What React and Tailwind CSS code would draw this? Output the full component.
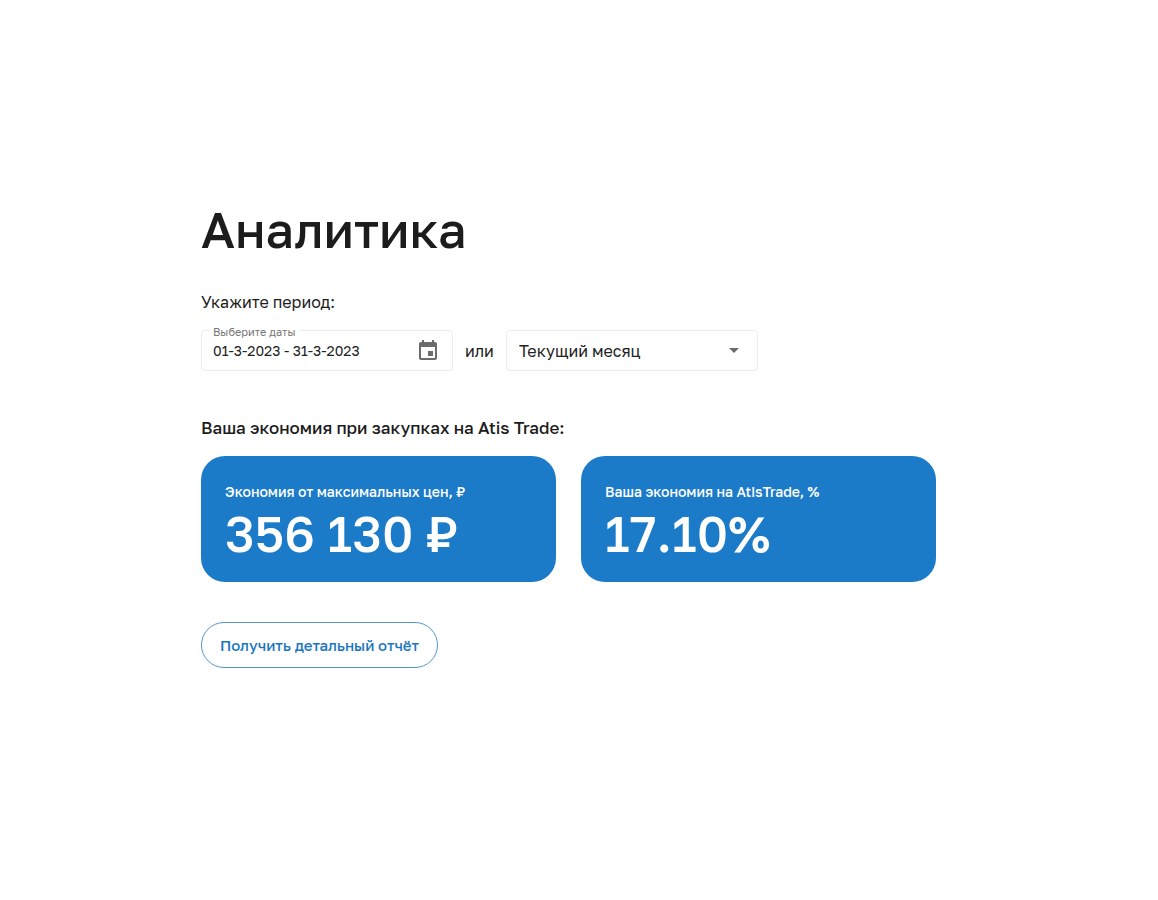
import { useState } from 'react';

const PERIODS = [
  { value: 'current', label: 'Текущий месяц' },
  { value: 'previous', label: 'Прошлый месяц' },
  { value: 'year', label: 'Текущий год' },
];

const STATS = [
  { title: 'Экономия от максимальных цен, ₽', value: '356 130 ₽' },
  { title: 'Ваша экономия на AtisTrade, %', value: '17.10%' },
];

function CalendarIcon() {
  return (
    <svg viewBox="0 0 24 24" className="h-6 w-6 fill-current" aria-hidden="true">
      <path d="M17 12h-5v5h5v-5zM16 1v2H8V1H6v2H5c-1.11 0-1.99.9-1.99 2L3 19c0 1.1.89 2 2 2h14c1.1 0 2-.9 2-2V5c0-1.1-.9-2-2-2h-1V1h-2zm3 18H5V8h14v11z" />
    </svg>
  );
}

function DateRangeField({ value, onChange }) {
  return (
    <div className="relative flex h-[41px] w-[252px] items-center rounded border border-[#ececec] pr-3 pl-[11px]">
      <label
        htmlFor="dates"
        className="absolute -top-[7px] left-2 bg-white px-[3px] text-[11px] leading-4 text-[#777777]"
      >
        Выберите даты
      </label>
      <input
        id="dates"
        type="text"
        value={value}
        onChange={(e) => onChange(e.target.value)}
        className="min-w-0 flex-1 bg-transparent text-sm text-[#222222] outline-none"
      />
      <button type="button" aria-label="Открыть календарь" className="text-[#6b6b6b]">
        <CalendarIcon />
      </button>
    </div>
  );
}

function PeriodSelect({ value, onChange }) {
  return (
    <div className="relative h-[41px] w-[252px]">
      <select
        aria-label="Период"
        value={value}
        onChange={(e) => onChange(e.target.value)}
        className="h-full w-full appearance-none rounded border border-[#ececec] bg-white pr-10 pl-3 text-base text-[#222222] outline-none"
      >
        {PERIODS.map((p) => (
          <option key={p.value} value={p.value}>{p.label}</option>
        ))}
      </select>
      <svg
        viewBox="0 0 24 24"
        className="pointer-events-none absolute top-2 right-3 h-6 w-6 fill-[#6b6b6b]"
        aria-hidden="true"
      >
        <path d="M7 10l5 5 5-5z" />
      </svg>
    </div>
  );
}

function StatCard({ title, value }) {
  return (
    <div className="rounded-3xl bg-[#1b7bc9] px-6 pt-6 pb-5 text-white">
      <div className="text-sm leading-6 font-medium">{title}</div>
      <div className="text-[50px] leading-[58px] font-medium">{value}</div>
    </div>
  );
}

export default function App() {
  const [dates, setDates] = useState('01-3-2023 - 31-3-2023');
  const [period, setPeriod] = useState('current');

  return (
    <main className="min-h-screen bg-white px-[201px] py-[200px] font-['Golos_Text','Inter',sans-serif] text-[#1c1c1c]">
      <div className="max-w-[735px]">
        <h1 className="text-[50px] leading-[58px] font-medium">Аналитика</h1>

        <p className="mt-8 text-base leading-6">Укажите период:</p>
        <div className="mt-4 flex flex-wrap items-center gap-3">
          <DateRangeField value={dates} onChange={setDates} />
          <span className="text-base">или</span>
          <PeriodSelect value={period} onChange={setPeriod} />
        </div>

        <h2 className="mt-[45px] text-[17px] leading-6 font-medium">
          Ваша экономия при закупках на Atis Trade:
        </h2>
        <div className="mt-4 grid grid-cols-2 gap-[25px]">
          {STATS.map((s) => (
            <StatCard key={s.title} title={s.title} value={s.value} />
          ))}
        </div>

        <button
          type="button"
          className="mt-10 h-[46px] rounded-full border border-[#5596cb] px-[18px] text-[15px] font-medium text-[#1b76c0]"
        >
          Получить детальный отчёт
        </button>
      </div>
    </main>
  );
}
